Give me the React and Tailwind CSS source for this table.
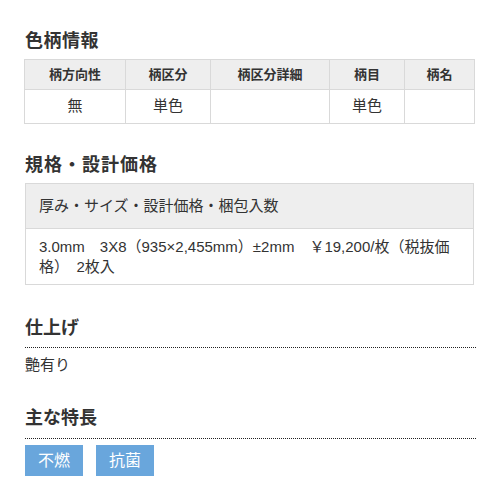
export default function App() {
  const font = { fontFamily: '"Liberation Sans", "Noto Sans CJK JP", sans-serif' };
  const th = "border border-[#d9d9d9] bg-[#eeeeee] h-[30px] p-0 text-[13px] font-bold text-center align-middle";
  const td = "border border-[#d9d9d9] h-[34px] p-0 text-[15px] text-center align-middle";
  return (
    <div className="w-[501px] h-[500px] bg-white text-[#333333] px-[25px] pt-[29px]" style={font}>
      <h2 className="text-[18px] font-bold leading-[24px] tracking-[0.5px]">色柄情報</h2>
      <table className="mt-[6px] -ml-[1px] w-[450px] border-collapse table-fixed">
        <colgroup>
          <col className="w-[101px]" />
          <col className="w-[85px]" />
          <col className="w-[119px]" />
          <col className="w-[75px]" />
          <col className="w-[70px]" />
        </colgroup>
        <thead>
          <tr>
            <th className={th}>柄方向性</th>
            <th className={th}>柄区分</th>
            <th className={th}>柄区分詳細</th>
            <th className={th}>柄目</th>
            <th className={th}>柄名</th>
          </tr>
        </thead>
        <tbody>
          <tr>
            <td className={td}>無</td>
            <td className={td}>単色</td>
            <td className={td}></td>
            <td className={td}>単色</td>
            <td className={td}></td>
          </tr>
        </tbody>
      </table>

      <h2 className="mt-[29px] text-[18px] font-bold leading-[24px] tracking-[1px]">規格・設計価格</h2>
      <div className="mt-[6px] border border-[#d9d9d9] w-[449px]">
        <div className="bg-[#eeeeee] h-[45px] flex items-center px-[13px] text-[15px] border-b border-[#d9d9d9]">
          厚み・サイズ・設計価格・梱包入数
        </div>
        <div className="px-[13px] pt-[8px] pb-[7px] text-[15px] leading-[20px]">
          3.0mm　3X8（935×2,455mm）±2mm　￥19,200/枚（税抜価格）　2枚入
        </div>
      </div>

      <h2 className="mt-[31px] pb-[7px] text-[18px] font-bold leading-[24px] border-b border-dotted border-[#222222]">仕上げ</h2>
      <p className="mt-[7px] text-[15px] leading-[20px]">艶有り</p>

      <h2 className="mt-[31px] pb-[8px] text-[18px] font-bold leading-[24px] border-b border-dotted border-[#222222]">主な特長</h2>
      <div className="mt-[6px] flex gap-[13px]">
        <span className="w-[58px] h-[31px] bg-[#69a6dc] text-white text-[16px] flex items-center justify-center">不燃</span>
        <span className="w-[58px] h-[31px] bg-[#69a6dc] text-white text-[16px] flex items-center justify-center">抗菌</span>
      </div>
    </div>
  );
}
